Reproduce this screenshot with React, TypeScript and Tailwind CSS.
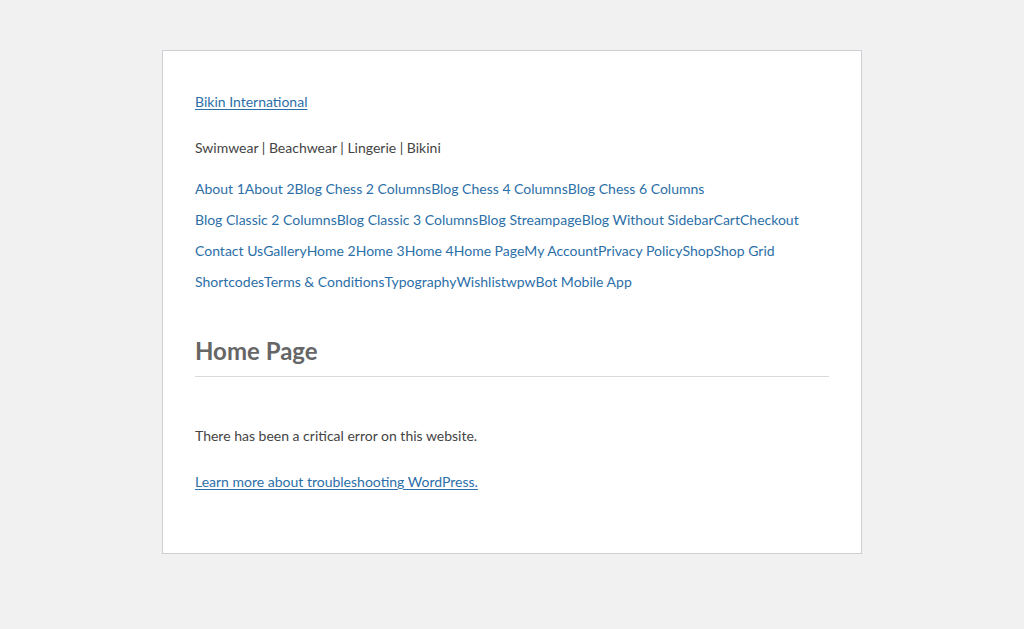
const MENU_ROWS: string[][] = [
  ['About 1', 'About 2', 'Blog Chess 2 Columns', 'Blog Chess 4 Columns', 'Blog Chess 6 Columns'],
  ['Blog Classic 2 Columns', 'Blog Classic 3 Columns', 'Blog Streampage', 'Blog Without Sidebar', 'Cart', 'Checkout'],
  ['Contact Us', 'Gallery', 'Home 2', 'Home 3', 'Home 4', 'Home Page', 'My Account', 'Privacy Policy', 'Shop', 'Shop Grid'],
  ['Shortcodes', 'Terms & Conditions', 'Typography', 'Wishlist', 'wpwBot Mobile App'],
];

export default function App() {
  return (
    <div className="min-h-[629px] bg-[#f1f1f1] pt-[50px] font-['Lato','Noto_Sans',sans-serif] text-[14px] text-[#444]">
      <div className="mx-auto w-[700px] border border-[#ccd0d4] bg-white px-8 pt-[41px] pb-[61px]">
        <p className="leading-[20px]">
          <a href="#" className="text-[#2c6fa8] underline underline-offset-2">
            Bikin International
          </a>
        </p>
        <p className="mt-[26px] leading-[20px]">Swimwear | Beachwear | Lingerie | Bikini</p>

        <nav className="mt-[15px]">
          {MENU_ROWS.map((row, i) => (
            <div key={i} className="flex leading-[31px]">
              {row.map((item) => (
                <a key={item} href="#" className="whitespace-nowrap text-[#2c6fa8]">
                  {item}
                </a>
              ))}
            </div>
          ))}
        </nav>

        <h1 className="mt-[38px] border-b border-[#dadada] pb-[9px] text-[24px] font-bold leading-[32px] text-[#666]">
          Home Page
        </h1>

        <p className="mt-[49px] leading-[20px]">There has been a critical error on this website.</p>
        <p className="mt-[26px] leading-[20px]">
          <a href="#" className="text-[#2c6fa8] underline underline-offset-2">
            Learn more about troubleshooting WordPress.
          </a>
        </p>
      </div>
    </div>
  );
}
